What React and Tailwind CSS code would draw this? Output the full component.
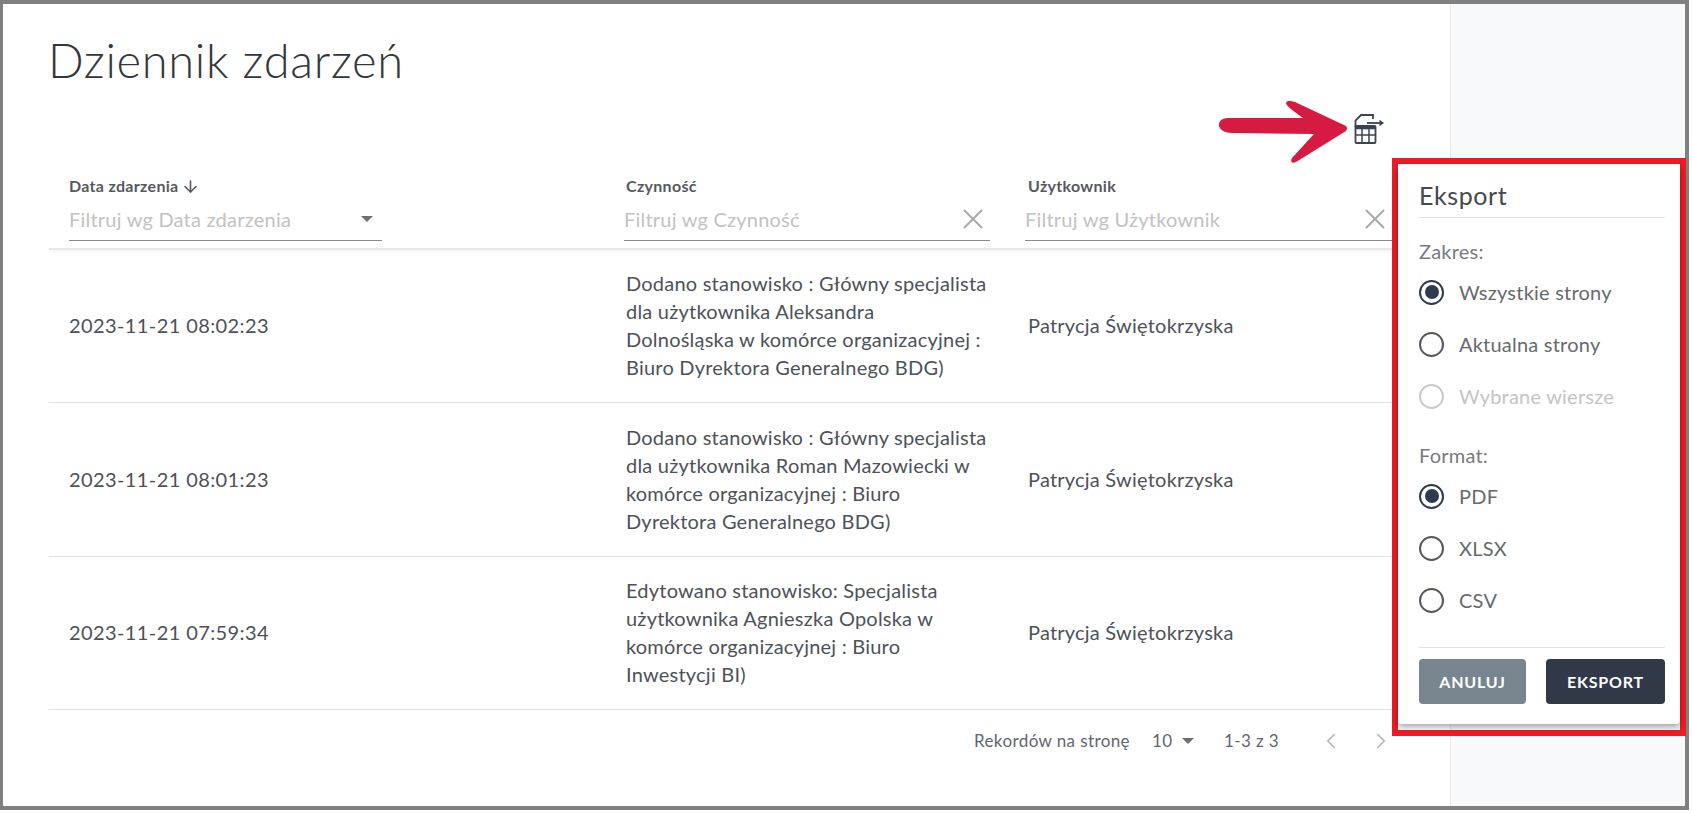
import React from "react";
import { X, ChevronLeft, ChevronRight, ArrowDown } from "lucide-react";

const Caret = ({ className }) => (
  <svg width="12" height="6" viewBox="0 0 12 6" className={className}><path d="M0 0h12L6 6z" fill="#6f6f6f" /></svg>
);

const rows = [
  ["2023-11-21 08:02:23", ["Dodano stanowisko : Główny specjalista", "dla użytkownika Aleksandra", "Dolnośląska w komórce organizacyjnej :", "Biuro Dyrektora Generalnego BDG)"]],
  ["2023-11-21 08:01:23", ["Dodano stanowisko : Główny specjalista", "dla użytkownika Roman Mazowiecki w", "komórce organizacyjnej : Biuro", "Dyrektora Generalnego BDG)"]],
  ["2023-11-21 07:59:34", ["Edytowano stanowisko: Specjalista", "użytkownika Agnieszka Opolska w", "komórce organizacyjnej : Biuro", "Inwestycji BI)"]],
];

const cols = "grid grid-cols-[549px_382px_1fr]";
const body = "text-[20px] tracking-[0.22px]";
const label = "text-[16px] tracking-[0.3px] font-bold leading-[20px] text-[#55595f]";

function Filter({ text, width, caret }) {
  return (
    <div className={`flex items-center justify-between mt-[1px] h-[44px] border-b border-[#8a8a8a] ${width}`}>
      <span className={`${body} text-[#c2c2c2]`}>{text}</span>
      {caret ? <Caret className="mr-[9px]" /> : <X size={34} strokeWidth={1.4} className="text-[#a9a9a9]" />}
    </div>
  );
}

function Radio({ label, checked, disabled }) {
  return (
    <div className="flex items-center h-[52px] gap-[15px]">
      <span className={`flex items-center justify-center w-[25px] h-[25px] rounded-full border-[2.5px] ${disabled ? "border-[#c9c9c9]" : checked ? "border-[#2f3a4d]" : "border-[#55595e]"}`}>
        {checked && <span className="w-[14px] h-[14px] rounded-full bg-[#2f3a4d]" />}
      </span>
      <span className={`${body} ${disabled ? "text-[#c4c4c4]" : "text-[#666a6e]"}`}>{label}</span>
    </div>
  );
}

export default function App() {
  return (
    <div className="relative w-[1692px] h-[813px] bg-white overflow-hidden text-[#4d5259] font-['Lato','Noto_Sans',sans-serif]">
      <div className="flex w-[1689px] h-[810px] border-t-4 border-l-[3px] border-r-4 border-b-4 border-[#808080]">
        <main className="w-[1448px] border-r border-[#e6e8ea] pl-[46px] pr-[42px] shrink-0">
          <h1 className="pt-[31px] -ml-[1px] h-[80px] text-[47px] leading-[50px] tracking-[0.7px] font-light text-[#33373c]">Dziennik zdarzeń</h1>
          <div className="flex justify-end h-[64px] pr-[24px] pt-[29px]">
            <svg width="30" height="32" viewBox="0 0 30 32" fill="none" stroke="#3b4454" strokeWidth="1.8">
              <path d="M19 6V2H7L1.500 7.500V14" />
              <rect x="1.500" y="13" width="20" height="17" rx="1" />
              <path d="M1.500 15h20" strokeWidth="2.600" />
              <path d="M1.500 22h20M8 15v15M15 15v15" strokeWidth="1.500" />
              <path d="M13 10h13" />
              <path d="M25.500 6.800 30 10l-4.500 3.200z" fill="#3b4454" stroke="none" />
            </svg>
          </div>
          <div className="h-[102px] border-b-2 border-[#e8e8e8] shadow-[0_3px_5px_-3px_rgba(0,0,0,0.08)]">
            <div className={`${cols} pt-[28px]`}>
              <div className="pl-[20px]">
                <div className={`flex items-center gap-[2px] ${label}`}>Data zdarzenia <ArrowDown size={19} /></div>
                <Filter text="Filtruj wg Data zdarzenia" width="w-[313px]" caret />
              </div>
              <div className="pl-[26px]">
                <div className={`pl-[2px] ${label}`}>Czynność</div>
                <Filter text="Filtruj wg Czynność" width="w-[366px]" />
              </div>
              <div className="pl-[45px]">
                <div className={`pl-[3px] ${label}`}>Użytkownik</div>
                <Filter text="Filtruj wg Użytkownik" width="w-[367px]" />
              </div>
            </div>
          </div>
          {rows.map(([date, lines]) => (
            <div key={date} className={`${cols} h-[153.400px] pb-[2px] items-center border-b border-[#e2e2e2] ${body} leading-[28px]`}>
              <div className="pl-[20px] tracking-[0.4px]">{date}</div>
              <div className="pl-[28px]">{lines.map((l) => <div key={l} className="whitespace-nowrap">{l}</div>)}</div>
              <div className="pl-[48px]">Patrycja Świętokrzyska</div>
            </div>
          ))}
          <div className="flex items-center h-[60px] pt-[2px] text-[17px] tracking-[0.4px] text-[#5f6670]">
            <span className="ml-[925px] w-[178px]">Rekordów na stronę</span>
            <span className="w-[30px]">10</span>
            <Caret />
            <span className="ml-[30px] w-[56px]">1-3 z 3</span>
            <ChevronLeft size={26} strokeWidth={1.500} className="ml-[38px] text-[#b4b4b4]" />
            <ChevronRight size={26} strokeWidth={1.500} className="ml-[24px] text-[#b4b4b4]" />
          </div>
        </main>
        <aside className="flex-1 bg-[#f8f9fa]" />
      </div>

      <svg className="absolute left-[1218px] top-[100px]" width="130" height="64" viewBox="0 0 130 64">
        <path d="M12 18L85 18C78 13 68 6 68 3C69 0 73 1 77 2L128 26Q130 28 128 31L78 62C74 64 72 62 74 58L96 34L14 33C4 33 0 27 1 24C2 19 6 18 12 18Z" fill="#d61a42" />
      </svg>

      <div className="absolute left-[1392px] top-[158px] w-[294px] h-[578px] border-[6px] border-[#ed1c24]">
        <div className="h-[560px] bg-white rounded-b shadow-[0_3px_6px_rgba(0,0,0,0.35)] pl-[21px] pr-[15px]">
          <div className="h-[54px] pt-[16px] border-b border-[#e2e2e2] text-[25px] leading-[30px] tracking-[0.6px] text-[#45494e]">Eksport</div>
          <div className={`pt-[21px] ${body} leading-[24px] text-[#777b80]`}>Zakres:</div>
          <div className="mt-[3px]">
            <Radio label="Wszystkie strony" checked />
            <Radio label="Aktualna strony" />
            <Radio label="Wybrane wiersze" disabled />
          </div>
          <div className={`pt-[21px] ${body} leading-[24px] text-[#777b80]`}>Format:</div>
          <div className="mt-[3px]">
            <Radio label="PDF" checked />
            <Radio label="XLSX" />
            <Radio label="CSV" />
          </div>
          <div className="flex justify-between mt-[21px] pt-[11px] border-t border-[#e2e2e2]">
            <button className="w-[107px] h-[45px] rounded bg-[#78858f] text-white font-bold text-[16px] tracking-[0.8px]">ANULUJ</button>
            <button className="w-[119px] h-[45px] rounded bg-[#313847] text-white font-bold text-[16px] tracking-[0.8px]">EKSPORT</button>
          </div>
        </div>
      </div>
    </div>
  );
}
